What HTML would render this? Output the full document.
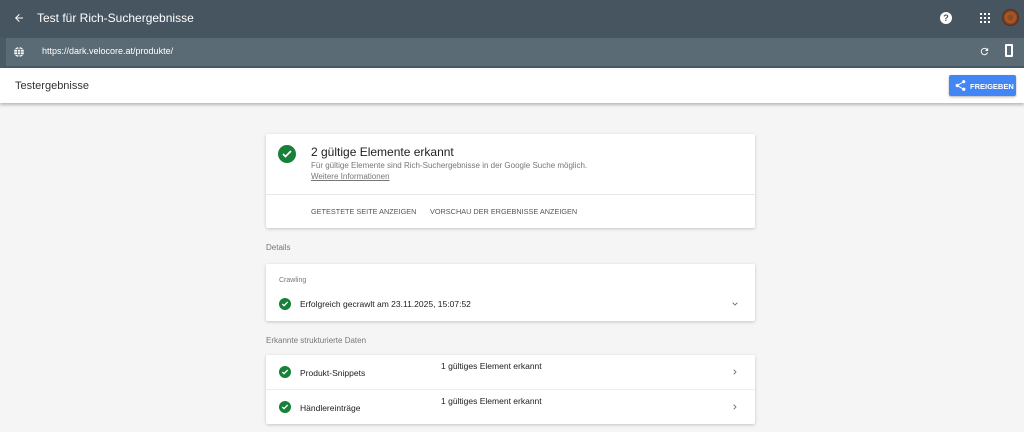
<!DOCTYPE html>
<html><head><meta charset="utf-8"><style>
*{box-sizing:border-box;margin:0;padding:0}
body{width:1024px;height:432px;overflow:hidden;background:#f5f5f5;font-family:"Liberation Sans",sans-serif;position:relative}
.abs{position:absolute}
.top{left:0;top:0;width:1024px;height:38px;background:#46555f}
.url{left:0;top:38px;width:1024px;height:30px;background:#4a5a64}
.url2{left:6px;top:38px;width:1018px;height:28px;background:#5b6b75}
.hdr{left:0;top:68px;width:1024px;height:35px;background:#fff;box-shadow:0 2px 3px rgba(0,0,0,.25)}
.card{background:#fff;box-shadow:0 1px 3px rgba(0,0,0,.2);border-radius:2px;left:266px;width:489px}
.chk{width:14px;height:14px;border-radius:50%;background:#188038;display:flex;align-items:center;justify-content:center}
.t{color:#202124;font-size:9px;white-space:nowrap}
.g{color:#777}
</style></head><body>
<div class="abs top"></div>
<svg class="abs" style="left:13px;top:12px" width="12" height="12" viewBox="0 0 24 24"><path d="M20 11H7.8l5.6-5.6L12 4l-8 8 8 8 1.4-1.4L7.8 13H20z" fill="#fff"/></svg>
<div class="abs" style="left:37px;top:11px;color:#fff;font-size:12px">Test für Rich-Suchergebnisse</div>
<div class="abs" style="left:940px;top:12px;width:12px;height:12px;border-radius:50%;background:#fff;color:#46555f;font-size:9px;font-weight:bold;text-align:center;line-height:12px">?</div>
<svg class="abs" style="left:980px;top:13px" width="10" height="10"><g fill="#fff"><rect x="0" y="0" width="2" height="2"/><rect x="4" y="0" width="2" height="2"/><rect x="8" y="0" width="2" height="2"/><rect x="0" y="4" width="2" height="2"/><rect x="4" y="4" width="2" height="2"/><rect x="8" y="4" width="2" height="2"/><rect x="0" y="8" width="2" height="2"/><rect x="4" y="8" width="2" height="2"/><rect x="8" y="8" width="2" height="2"/></g></svg>
<div class="abs" style="left:1002px;top:9px;width:17px;height:17px;border-radius:50%;background:radial-gradient(circle,#8a4a22 15%,#b05a28 40%,#2a1a14 80%)"></div>
<div class="abs url"></div><div class="abs url2"></div>
<svg class="abs" style="left:13px;top:46px" width="12" height="12" viewBox="0 0 24 24"><circle cx="12" cy="12" r="10" fill="#fff"/><path d="M2 12h20M12 2c-4 5-4 15 0 20M12 2c4 5 4 15 0 20M4 7h16M4 17h16" stroke="#5b6b75" stroke-width="1.6" fill="none"/></svg>
<div class="abs" style="left:42px;top:46px;color:#fff;font-size:9px">https://dark.velocore.at/produkte/</div>
<svg class="abs" style="left:979px;top:46px" width="11" height="11" viewBox="0 0 24 24"><path d="M17.6 6.4A8 8 0 1 0 19.7 14h-2.1a6 6 0 1 1-1.4-6.2L13 11h7V4z" fill="#fff"/></svg>
<div class="abs" style="left:1005px;top:44px;width:8px;height:13px;border:2px solid #fff;border-radius:1px"></div>
<div class="abs hdr"></div>
<div class="abs" style="left:15px;top:80px;color:#333;font-size:11px">Testergebnisse</div>
<div class="abs" style="left:949px;top:75px;width:67px;height:21px;background:#4285f4;border-radius:2px;box-shadow:0 1px 2px rgba(0,0,0,.3)"></div>
<svg class="abs" style="left:954px;top:79px" width="13" height="13" viewBox="0 0 24 24"><path d="M18 16a3 3 0 0 0-2 .8L8.9 12.7a3 3 0 0 0 0-1.4L16 7.2A3 3 0 1 0 15 5a3 3 0 0 0 .1.7L8 9.8a3 3 0 1 0 0 4.4l7.1 4.2A3 3 0 1 0 18 16z" fill="#fff"/></svg>
<div class="abs" style="left:970px;top:82px;color:#fff;font-size:7.5px;font-weight:bold">FREIGEBEN</div>

<div class="abs card" style="top:134px;height:94px"></div>
<div class="abs chk" style="left:278px;top:145px;width:18px;height:18px"><svg width="12" height="12" viewBox="0 0 24 24"><path d="M4 12l5 5L20 6" stroke="#fff" stroke-width="3.5" fill="none"/></svg></div>
<div class="abs t" style="left:311px;top:145px;font-size:12px">2 gültige Elemente erkannt</div>
<div class="abs t g" style="left:311px;top:161px;font-size:8px">Für gültige Elemente sind Rich-Suchergebnisse in der Google Suche möglich.</div>
<div class="abs t g" style="left:311px;top:172px;font-size:8px;text-decoration:underline">Weitere Informationen</div>
<div class="abs" style="left:266px;top:194px;width:489px;height:1px;background:#e6e6e6"></div>
<div class="abs t" style="left:311px;top:207px;font-size:7.3px;color:#555">GETESTETE SEITE ANZEIGEN</div>
<div class="abs t" style="left:430px;top:207px;font-size:7.3px;color:#555">VORSCHAU DER ERGEBNISSE ANZEIGEN</div>

<div class="abs t g" style="left:266px;top:243px;font-size:8px">Details</div>
<div class="abs card" style="top:264px;height:57px"></div>
<div class="abs t g" style="left:279px;top:277px;font-size:7px">Crawling</div>
<div class="abs chk" style="left:279px;top:298px;width:12px;height:12px"><svg width="8" height="8" viewBox="0 0 24 24"><path d="M4 12l5 5L20 6" stroke="#fff" stroke-width="4" fill="none"/></svg></div>
<div class="abs t" style="left:300px;top:299px;font-size:8.5px">Erfolgreich gecrawlt am 23.11.2025, 15:07:52</div>
<svg class="abs" style="left:731px;top:300px" width="8" height="8" viewBox="0 0 24 24"><path d="M5 8l7 7 7-7" stroke="#666" stroke-width="2.5" fill="none"/></svg>

<div class="abs t g" style="left:266px;top:336px;font-size:8px">Erkannte strukturierte Daten</div>
<div class="abs card" style="top:355px;height:69px"></div>
<div class="abs" style="left:266px;top:389px;width:489px;height:1px;background:#eee"></div>
<div class="abs chk" style="left:279px;top:366px;width:12px;height:12px"><svg width="8" height="8" viewBox="0 0 24 24"><path d="M4 12l5 5L20 6" stroke="#fff" stroke-width="4" fill="none"/></svg></div>
<div class="abs t" style="left:300px;top:368px;font-size:8.5px">Produkt-Snippets</div>
<div class="abs t" style="left:441px;top:361px;font-size:8.5px">1 gültiges Element erkannt</div>
<svg class="abs" style="left:731px;top:368px" width="8" height="8" viewBox="0 0 24 24"><path d="M8 5l7 7-7 7" stroke="#666" stroke-width="2.5" fill="none"/></svg>
<div class="abs chk" style="left:279px;top:401px;width:12px;height:12px"><svg width="8" height="8" viewBox="0 0 24 24"><path d="M4 12l5 5L20 6" stroke="#fff" stroke-width="4" fill="none"/></svg></div>
<div class="abs t" style="left:300px;top:403px;font-size:8.5px">Händlereinträge</div>
<div class="abs t" style="left:441px;top:396px;font-size:8.5px">1 gültiges Element erkannt</div>
<svg class="abs" style="left:731px;top:403px" width="8" height="8" viewBox="0 0 24 24"><path d="M8 5l7 7-7 7" stroke="#666" stroke-width="2.5" fill="none"/></svg>
</body></html>
